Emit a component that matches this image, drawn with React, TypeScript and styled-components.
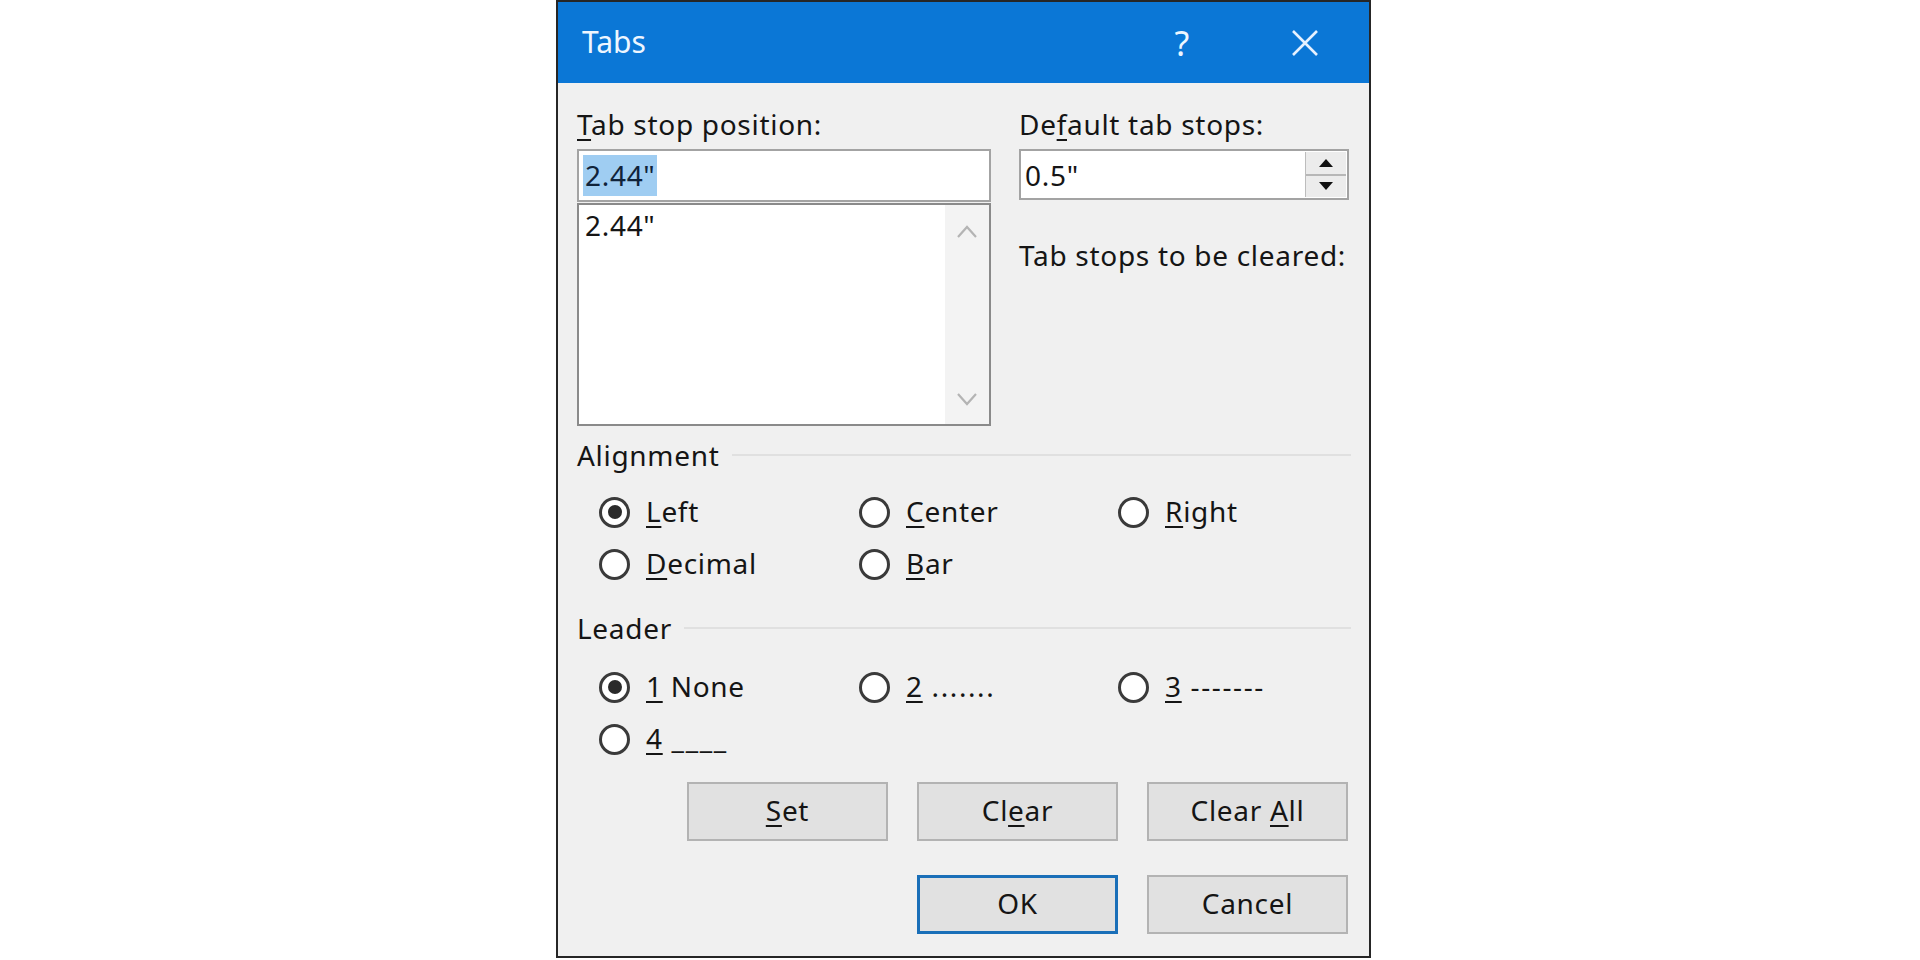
import React, {useState} from 'react'
import styled, {createGlobalStyle} from 'styled-components'

const GlobalStyle = createGlobalStyle`
  html, body {
    margin: 0;
    padding: 0;
    background: #ffffff;
  }
  body {
    font-family: "Noto Sans", "Open Sans", sans-serif;
    color: #151515;
  }
`

const Page = styled.div`
  width: 1920px;
  height: 960px;
  padding-left: 556px;
  box-sizing: border-box;
  overflow: hidden;
`

const Dialog = styled.div`
  width: 815px;
  height: 958px;
  box-sizing: border-box;
  border: 2px solid #262626;
  background: #f0f0f0;
  display: flex;
  flex-direction: column;
`

const TitleBar = styled.div`
  height: 81px;
  flex: none;
  background: #0b77d6;
  display: flex;
  align-items: center;
  padding-left: 24px;
  color: #eef6ff;
`

const Title = styled.div`
  flex: 1;
  font-size: 30px;
  line-height: 40px;
  margin-top: -2px;
`

const TitleButton = styled.div<{ $w: number; $mr?: number }>`
  width: ${p => p.$w}px;
  margin-right: ${p => p.$mr || 0}px;
  height: 81px;
  display: flex;
  align-items: center;
  justify-content: center;
  font-size: 34px;
`

const Body = styled.div`
  flex: 1;
  padding: 24px 20px 0 19px;
  display: flex;
  flex-direction: column;
  font-size: 28px;
  letter-spacing: 0.7px;
`

const TopSection = styled.div`
  display: flex;
  gap: 28px;
`

const Column = styled.div<{ $w: number }>`
  width: ${p => p.$w}px;
  display: flex;
  flex-direction: column;
`

const FieldLabel = styled.div<{ $mt?: number }>`
  line-height: 34px;
  height: 34px;
  margin-top: ${p => p.$mt || 0}px;
  margin-bottom: 8px;
  white-space: nowrap;
`

const Key = styled.span`
  text-decoration: underline;
  text-decoration-thickness: 2px;
  text-underline-offset: 4px;
`

const Pattern = styled.span`
  letter-spacing: 1.6px;
`

const TextBox = styled.div<{ $h: number }>`
  height: ${p => p.$h}px;
  box-sizing: border-box;
  border: 2px solid #a3a3a3;
  background: #ffffff;
  display: flex;
  align-items: center;
  padding-left: 4px;
  position: relative;
`

const Selected = styled.span`
  background: #9fcdf2;
  padding: 1px 2px 2px 2px;
  color: #10233a;
`

const ListBox = styled.div`
  height: 223px;
  margin-top: 1px;
  box-sizing: border-box;
  border: 2px solid #8a8a8a;
  background: #ffffff;
  display: flex;
`

const ListItems = styled.div`
  flex: 1;
  padding: 3px 0 0 6px;
  line-height: 34px;
`

const ScrollTrack = styled.div`
  width: 44px;
  background: #f3f3f3;
  display: flex;
  flex-direction: column;
  justify-content: space-between;
  align-items: center;
  padding: 20px 0 18px;
`

const Spinner = styled.div`
  position: absolute;
  right: 1px;
  top: 1px;
  bottom: 1px;
  width: 40px;
  display: flex;
  flex-direction: column;
  border-left: 1px solid #bdbdbd;
`

const SpinHalf = styled.div`
  flex: 1;
  display: flex;
  align-items: center;
  justify-content: center;
  background: #ececec;
  & + & {
    border-top: 2px solid #b7b7b7;
  }
`

const GroupHeader = styled.div<{ $mt: number }>`
  margin-top: ${p => p.$mt}px;
  height: 34px;
  line-height: 34px;
  display: flex;
  align-items: center;
  gap: 12px;
  &::after {
    content: '';
    flex: 1;
    height: 2px;
    background: #e0e0e0;
    margin-right: -2px;
  }
`

const RadioGrid = styled.div<{ $mt: number }>`
  margin-top: ${p => p.$mt}px;
  padding-left: 22px;
  display: grid;
  grid-template-columns: 260px 259px 250px;
  grid-auto-rows: 52px;
`

const RadioItem = styled.label`
  display: flex;
  align-items: center;
  gap: 16px;
  white-space: nowrap;
  cursor: default;
`

const RadioCircle = styled.span<{ $on: boolean }>`
  width: 31px;
  height: 31px;
  flex: none;
  box-sizing: border-box;
  border-radius: 50%;
  border: 3px solid #3a3a3a;
  background: #ffffff;
  display: flex;
  align-items: center;
  justify-content: center;
  margin-top: 2px;
  &::after {
    content: '';
    width: 14px;
    height: 14px;
    border-radius: 50%;
    background: ${p => (p.$on ? '#2a2a2a' : 'transparent')};
  }
`

const ButtonRow = styled.div<{ $mt: number }>`
  margin-top: ${p => p.$mt}px;
  display: flex;
  justify-content: flex-end;
  gap: 29px;
  padding-right: 1px;
`

const Button = styled.button<{ $default?: boolean }>`
  width: 201px;
  height: 59px;
  box-sizing: border-box;
  background: #e1e1e1;
  border: ${p => (p.$default ? '3px solid #1a6fb8' : '2px solid #b3b3b3')};
  font-family: inherit;
  font-size: 28px;
  letter-spacing: 0.7px;
  color: #151515;
  padding: 0 0 4px;
`

const Chevron = ({up}: { up?: boolean }) => (
  <svg width="22" height="13" viewBox="0 0 22 13">
    <path d={up ? 'M2 12 L11 2 L20 12' : 'M2 1 L11 11 L20 1'} fill="none" stroke="#b4b4b4" strokeWidth="2.2"/>
  </svg>
)

const Triangle = ({up}: { up?: boolean }) => (
  <svg width="16" height="9" viewBox="0 0 16 9">
    <path d={up ? 'M1 9 L8 1 L15 9 Z' : 'M1 0 L8 8 L15 0 Z'} fill="#111"/>
  </svg>
)

const alignments = [
  {key: 'L', rest: 'eft', id: 'left'},
  {key: 'C', rest: 'enter', id: 'center'},
  {key: 'R', rest: 'ight', id: 'right'},
  {key: 'D', rest: 'ecimal', id: 'decimal'},
  {key: 'B', rest: 'ar', id: 'bar'},
]

const leaders = [
  {key: '1', rest: ' None', id: '1', pattern: false},
  {key: '2', rest: ' .......', id: '2', pattern: true},
  {key: '3', rest: ' -------', id: '3', pattern: true},
  {key: '4', rest: ' ____', id: '4', pattern: true},
]

const App: React.FC = () => {
  const [align, setAlign] = useState('left')
  const [leader, setLeader] = useState('1')

  return (
    <Page>
      <GlobalStyle/>
      <Dialog>
        <TitleBar>
          <Title>Tabs</Title>
          <TitleButton $w={104} $mr={7}>?</TitleButton>
          <TitleButton $w={128}>
            <svg width="28" height="28" viewBox="0 0 28 28">
              <path d="M2 2 L26 26 M26 2 L2 26" stroke="#e6f1ff" strokeWidth="2.6"/>
            </svg>
          </TitleButton>
        </TitleBar>

        <Body>
          <TopSection>
            <Column $w={414}>
              <FieldLabel><Key>T</Key>ab stop position:</FieldLabel>
              <TextBox $h={53}>
                <Selected>2.44"</Selected>
              </TextBox>
              <ListBox>
                <ListItems>2.44"</ListItems>
                <ScrollTrack>
                  <Chevron up/>
                  <Chevron/>
                </ScrollTrack>
              </ListBox>
            </Column>
            <Column $w={330}>
              <FieldLabel>De<Key>f</Key>ault tab stops:</FieldLabel>
              <TextBox $h={51}>
                0.5"
                <Spinner>
                  <SpinHalf><Triangle up/></SpinHalf>
                  <SpinHalf><Triangle/></SpinHalf>
                </Spinner>
              </TextBox>
              <FieldLabel $mt={38}>Tab stops to be cleared:</FieldLabel>
            </Column>
          </TopSection>

          <GroupHeader $mt={12}>Alignment</GroupHeader>
          <RadioGrid $mt={13}>
            {alignments.map(a => (
              <RadioItem key={a.id} onClick={() => setAlign(a.id)}>
                <RadioCircle $on={align === a.id}/>
                <span><Key>{a.key}</Key>{a.rest}</span>
              </RadioItem>
            ))}
          </RadioGrid>

          <GroupHeader $mt={22}>Leader</GroupHeader>
          <RadioGrid $mt={15}>
            {leaders.map(l => (
              <RadioItem key={l.id} onClick={() => setLeader(l.id)}>
                <RadioCircle $on={leader === l.id}/>
                <span>
                  <Key>{l.key}</Key>
                  {l.pattern ? <Pattern>{l.rest}</Pattern> : l.rest}
                </span>
              </RadioItem>
            ))}
          </RadioGrid>

          <ButtonRow $mt={18}>
            <Button><Key>S</Key>et</Button>
            <Button>Cl<Key>e</Key>ar</Button>
            <Button>Clear <Key>A</Key>ll</Button>
          </ButtonRow>
          <ButtonRow $mt={34}>
            <Button $default>OK</Button>
            <Button>Cancel</Button>
          </ButtonRow>
        </Body>
      </Dialog>
    </Page>
  )
}

export default App
